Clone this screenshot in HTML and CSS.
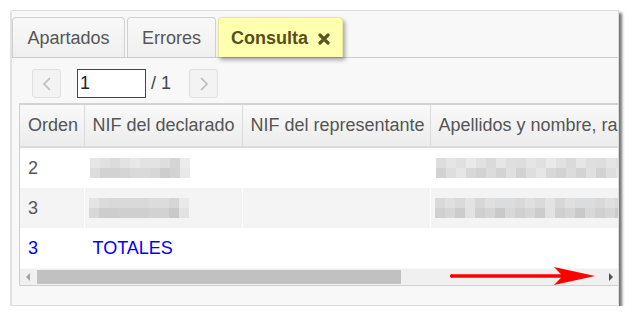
FILE: index.html
```html
<!DOCTYPE html>
<html lang="es">
<head>
    <meta charset="UTF-8">
    <title>Consulta</title>
    <link rel="stylesheet" href="styles.css">
</head>
<body>
    <div class="panel">
        <div class="tabs">
            <div class="tab tab-apartados">Apartados</div>
            <div class="tab tab-errores">Errores</div>
            <div class="tab tab-active">Consulta
                <svg class="close" width="12" height="12" viewBox="0 0 12 12"><path d="M2 2 L10 10 M10 2 L2 10" stroke="#5c5620" stroke-width="3.2" stroke-linecap="round"/></svg>
            </div>
        </div>

        <div class="pager">
            <button class="pg-btn" type="button">
                <svg width="10" height="16" viewBox="0 0 10 16"><path d="M8 2 L2 8 L8 14" fill="none" stroke="#bbb" stroke-width="1.6"/></svg>
            </button>
            <input class="pg-input" type="text" value="1">
            <span class="pg-total">/ 1</span>
            <button class="pg-btn" type="button">
                <svg width="10" height="16" viewBox="0 0 10 16"><path d="M2 2 L8 8 L2 14" fill="none" stroke="#bbb" stroke-width="1.6"/></svg>
            </button>
        </div>

        <div class="grid-wrap">
            <table class="grid">
                <colgroup>
                    <col class="c-orden">
                    <col class="c-nif">
                    <col class="c-rep">
                    <col class="c-nom">
                </colgroup>
                <thead>
                    <tr>
                        <th>Orden</th>
                        <th>NIF del declarado</th>
                        <th>NIF del representante</th>
                        <th>Apellidos y nombre, razón social</th>
                    </tr>
                </thead>
                <tbody>
                    <tr>
                        <td>2</td>
                        <td><span class="blur blur-a"></span></td>
                        <td></td>
                        <td><span class="blur blur-long"></span></td>
                    </tr>
                    <tr class="odd">
                        <td>3</td>
                        <td><span class="blur blur-b"></span></td>
                        <td></td>
                        <td><span class="blur blur-long blur-long2"></span></td>
                    </tr>
                    <tr class="total">
                        <td>3</td>
                        <td>TOTALES</td>
                        <td></td>
                        <td></td>
                    </tr>
                </tbody>
            </table>
            <div class="hscroll">
                <span class="arr arr-left"></span>
                <span class="thumb"></span>
                <span class="arr arr-right"></span>
            </div>
            <!-- flecha roja sobre la barra -->
            <svg class="red-arrow" width="150" height="20" viewBox="0 0 150 20">
                <path d="M2 8.3 L112 8.3 L105 1 L146 10 L105 19 L112 11.7 L2 11.7 Z" fill="#f00"/>
                <circle cx="2.5" cy="10" r="1.7" fill="#f00"/>
            </svg>
        </div>
    </div>
</body>
</html>
```

FILE: styles.css
```css
body {
    margin: 0;
    background: #fff;
    font-family: "Liberation Sans", Arial, sans-serif;
    font-size: 18px;
    color: #555;
}
.panel {
    margin: 10px 0 0 10px;
    width: 609px;
    height: 296px;
    box-sizing: border-box;
    background: #f8f8f8;
    border: 1px solid #dcdcdc;
    border-left: 2px solid #e2e2e2;
    border-radius: 3px 0 0 0;
    box-shadow: 3px 3px 3px rgba(0, 0, 0, 0.55);
    overflow: hidden;
}
.tabs {
    display: flex;
    gap: 2px;
    padding: 6px 0 0 0;
    border-bottom: 1px solid #cbcbcb;
}
.tab {
    height: 40px;
    box-sizing: border-box;
    line-height: 40px;
    text-align: center;
    border: 1px solid #d0d0d0;
    border-bottom: none;
    border-radius: 4px 4px 0 0;
    background: linear-gradient(#f9f9f9, #efefef);
    color: #555;
}
.tab-apartados { width: 113px; }
.tab-errores { width: 89px; }
.tab-active {
    width: 125px;
    background: #ffffb0;
    border-color: #e8e89a;
    color: #55501c;
    font-weight: bold;
    box-shadow: 2px 3px 4px rgba(0, 0, 0, 0.35);
}
.close {
    margin-left: 5px;
    vertical-align: -1px;
}
.pager {
    display: flex;
    align-items: center;
    padding: 11px 0 0 20px;
    height: 29px;
}
.pg-btn {
    width: 29px;
    height: 29px;
    padding: 0;
    border: 1px solid #e0e0e0;
    border-radius: 3px;
    background: #f3f3f3;
    display: flex;
    align-items: center;
    justify-content: center;
}
.pg-input {
    margin-left: 16px;
    width: 69px;
    height: 29px;
    box-sizing: border-box;
    border: 1px solid #444;
    padding: 0 2px;
    font-family: inherit;
    font-size: 18px;
    color: #222;
    background: #fff;
}
.pg-total {
    margin: 0 18px 0 5px;
    color: #444;
}
.grid-wrap {
    position: relative;
    margin: 5px 0 0 7px;
    width: 620px;
    border: 1px solid #cfcfcf;
    border-top: 2px solid #d2d2d2;
}
.grid {
    border-collapse: collapse;
    table-layout: fixed;
    width: 720px;
}
.c-orden { width: 64px; }
.c-nif { width: 158px; }
.c-rep { width: 188px; }
.c-nom { width: 310px; }
.grid th {
    height: 41px;
    padding: 0 8px;
    text-align: left;
    font-weight: normal;
    white-space: nowrap;
    overflow: hidden;
    background: linear-gradient(#f9f9f9, #ececec);
    border-left: 1px solid #dadada;
    border-bottom: 2px solid #dcdcdc;
}
.grid th:first-child,
.grid td:first-child {
    border-left: none;
}
.grid td {
    height: 40px;
    padding: 0 8px;
    background: #fff;
    border-left: 1px solid #fff;
    white-space: nowrap;
    overflow: hidden;
}
.grid tr.odd td {
    background: #f4f4f4;
}
.grid tr.total td {
    color: #0000ff;
}
.blur {
    display: block;
    height: 20px;
    width: 100px;
    margin-left: -3px;
}
.blur-a {
    background:
        linear-gradient(to right, #e6e6e6 0 10px, #e1e1e1 10px 20px, #dcdcdc 20px 30px, #e3e3e3 30px 40px, #e8e8e8 40px 50px, #e3e3e3 50px 70px, #dedede 70px 80px, #d5d5d5 80px 90px, #ececec 90px 100px) top / 100% 50% no-repeat,
        linear-gradient(to right, #dcdcdc 0 10px, #d2d2d2 10px 30px, #d5d5d5 30px 40px, #dadada 40px 60px, #d7d7d7 60px 70px, #cdcdcd 70px 80px, #d3d3d3 80px 90px, #e8e8e8 90px 100px) bottom / 100% 50% no-repeat;
}
.blur-b {
    margin-left: -4px;
    background:
        linear-gradient(to right, #e4e4e4 0 10px, #dbdbdb 10px 20px, #d9d9d9 20px 60px, #dcdcdc 60px 80px, #d6d6d6 80px 90px, #e9e9e9 90px 100px) top / 100% 50% no-repeat,
        linear-gradient(to right, #d8d8d8 0 10px, #cdcdcd 10px 30px, #cfcfcf 30px 60px, #d2d2d2 60px 80px, #c8c8c8 80px 90px, #e2e2e2 90px 100px) bottom / 100% 50% no-repeat;
}
.blur-long {
    width: 200px;
    background:
        repeating-linear-gradient(to right, #dddddd 0 10px, #e5e5e5 10px 20px, #e0e0e0 20px 30px, #e9e9e9 30px 40px, #e1e1e1 40px 50px, #dadada 50px 60px, #e6e6e6 60px 70px, #dedede 70px 80px) top / 100% 50% no-repeat,
        repeating-linear-gradient(to right, #d2d2d2 0 10px, #dedede 10px 20px, #e6e6e6 20px 30px, #d8d8d8 30px 40px, #d2d2d2 40px 50px, #dcdcdc 50px 60px, #d3d3d3 60px 70px, #e0e0e0 70px 80px) bottom / 100% 50% no-repeat;
}
.blur-long2 {
    margin-left: -4px;
    background:
        repeating-linear-gradient(to right, #d9d9d9 0 10px, #e0e0e0 10px 20px, #dadada 20px 30px, #e3e3e3 30px 40px, #d7d7d7 40px 50px, #e0e0e0 50px 60px, #d9dde0 60px 70px, #dcdcdc 70px 80px) top / 100% 50% no-repeat,
        repeating-linear-gradient(to right, #d0d0d0 0 10px, #d6d6d6 10px 20px, #cccccc 20px 30px, #e2e2e2 30px 40px, #cfcfcf 40px 50px, #d5d5d5 50px 60px, #c9c9c9 60px 70px, #d8d8d8 70px 80px) bottom / 100% 50% no-repeat;
}
.hscroll {
    display: flex;
    align-items: center;
    height: 16px;
    background: #f0f0f0;
    margin-top: 1px;
}
.arr {
    width: 0;
    height: 0;
    border-top: 4px solid transparent;
    border-bottom: 4px solid transparent;
}
.arr-left {
    margin: 0 7px 0 6px;
    border-right: 4px solid #a3a3a3;
}
.thumb {
    width: 364px;
    height: 14px;
    background: #c1c1c1;
}
.arr-right {
    margin-left: 208px;
    border-left: 4px solid #505050;
}
.red-arrow {
    position: absolute;
    left: 429px;
    bottom: -1px;
}
```
